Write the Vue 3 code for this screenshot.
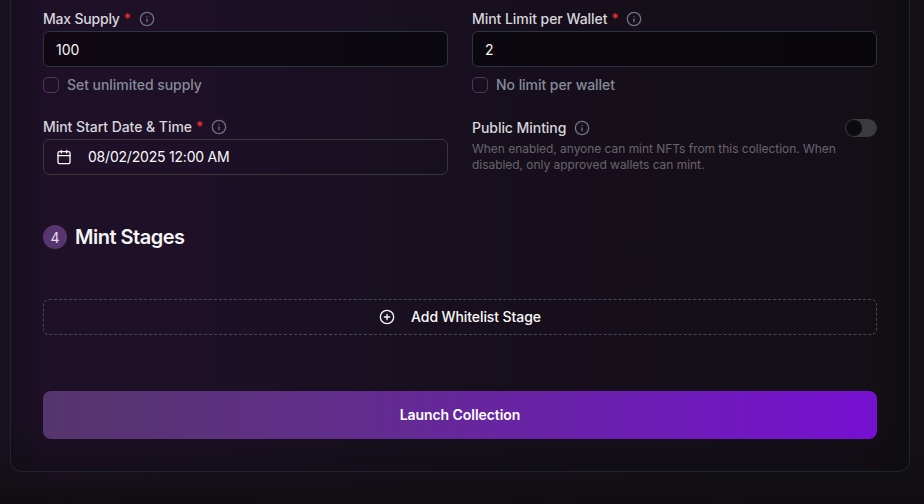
<script setup>
import { ref, h } from 'vue'

const supply = ref('100')
const limit = ref('2')
const unlimited = ref(false)
const noLimit = ref(false)
const publicMint = ref(false)

const InfoIcon = () =>
  h('svg', {
    width: 16, height: 16, viewBox: '0 0 24 24', fill: 'none', stroke: '#6b7280',
    'stroke-width': 2, 'stroke-linecap': 'round', 'stroke-linejoin': 'round',
  }, [
    h('circle', { cx: 12, cy: 12, r: 10 }),
    h('path', { d: 'M12 16v-4' }),
    h('path', { d: 'M12 8h.01' }),
  ])
</script>

<template>
  <main class="page">
    <section class="card">
      <div class="grid">
        <div class="field">
          <div class="label tight"><span>Max Supply</span><span class="req">*</span><InfoIcon /></div>
          <input v-model="supply" class="input" type="text" />
          <label class="check"><input v-model="unlimited" type="checkbox" /><span>Set unlimited supply</span></label>
        </div>
        <div class="field">
          <div class="label"><span>Mint Limit per Wallet</span><span class="req">*</span><InfoIcon /></div>
          <input v-model="limit" class="input" type="text" />
          <label class="check"><input v-model="noLimit" type="checkbox" /><span>No limit per wallet</span></label>
        </div>
        <div class="field">
          <div class="label"><span>Mint Start Date &amp; Time</span><span class="req">*</span><InfoIcon /></div>
          <button class="date">
            <svg width="16" height="16" viewBox="0 0 24 24" fill="none" stroke="currentColor" stroke-width="2" stroke-linecap="round" stroke-linejoin="round">
              <path d="M8 2v4M16 2v4M3 10h18" /><rect x="3" y="4" width="18" height="18" rx="2" />
            </svg>
            <span>08/02/2025 12:00 AM</span>
          </button>
        </div>
        <div class="field">
          <div class="toggle-row">
            <div class="label"><span>Public Minting</span><InfoIcon /></div>
            <button class="switch" :class="{ on: publicMint }" role="switch" :aria-checked="publicMint" @click="publicMint = !publicMint"><i></i></button>
          </div>
          <p class="hint">When enabled, anyone can mint NFTs from this collection. When disabled, only approved wallets can mint.</p>
        </div>
      </div>

      <div class="heading">
        <span class="step">4</span>
        <h2>Mint Stages</h2>
      </div>

      <button class="add">
        <svg width="16" height="16" viewBox="0 0 24 24" fill="none" stroke="currentColor" stroke-width="2" stroke-linecap="round" stroke-linejoin="round">
          <circle cx="12" cy="12" r="10" /><path d="M8 12h8M12 8v8" />
        </svg>
        <span>Add Whitelist Stage</span>
      </button>

      <button class="launch">Launch Collection</button>
    </section>
  </main>
</template>

<style>
body {
  background: #0f0d11;
}
</style>

<style scoped>
* {
  box-sizing: border-box;
}
.page {
  height: 504px;
  padding: 0 14px 32px 10px;
  overflow: hidden;
  font-family: Inter, "Liberation Sans", sans-serif;
  font-size: 14px;
  color: #f5f5f5;
  background:
    linear-gradient(180deg, transparent 430px, rgba(16, 14, 17, 0.5) 475px, #100e11 504px),
    linear-gradient(90deg, #18111f 0, #1f1228 60px, #1b1123 300px, #161019 650px, #131115 924px);
}
.card {
  height: 472px;
  padding: 11px 32px 0;
  border: 1px solid #1f2530;
  border-top: 0;
  border-radius: 0 0 12px 12px;
  background:
    linear-gradient(180deg, transparent 420px, rgba(14, 12, 17, 0.6) 472px),
    linear-gradient(90deg, #160f1c 0, #1e1027 34px, #1d1027 190px, #1a1022 300px, #160f1b 530px, #150f19 820px, #140e15 865px, #0f0d11 898px);
}
.grid {
  display: grid;
  grid-template-columns: 405px 405px;
  grid-template-rows: 108px 56px;
  column-gap: 24px;
}
.label {
  display: flex;
  align-items: center;
  height: 16px;
  font-weight: 500;
  line-height: 16px;
  letter-spacing: -0.05px;
  color: #d6d6dc;
  margin-bottom: 4px;
}
.label.tight {
  letter-spacing: -0.2px;
}
.label svg {
  margin-left: 8px;
}
.req {
  width: 7px;
  margin-left: 4px;
  color: #ef2b36;
}
.input {
  display: block;
  width: 100%;
  height: 36px;
  padding: 0 12px;
  border: 1px solid #2b3443;
  border-radius: 6px;
  outline: none;
  background: rgba(0, 0, 0, 0.5);
  color: #f5f5f5;
  font: 400 14px Inter, "Liberation Sans", sans-serif;
}
.check {
  display: flex;
  align-items: center;
  gap: 8px;
  height: 20px;
  margin-top: 8px;
  font-weight: 500;
  line-height: 16px;
  letter-spacing: -0.05px;
  color: #868b99;
}
.check span {
  padding-bottom: 1px;
}
.check input {
  appearance: none;
  width: 16px;
  height: 16px;
  margin: 0;
  border: 1px solid #553365;
  border-radius: 5px;
}
.check input:checked {
  background: #553365;
}
.date {
  display: flex;
  align-items: center;
  width: 100%;
  height: 36px;
  padding: 0 12px;
  gap: 16px;
  border: 1px solid #3a373b;
  border-radius: 6px;
  background: transparent;
  color: #fafafa;
  font: 400 14px Inter, "Liberation Sans", sans-serif;
  letter-spacing: -0.21px;
}
.date span,
.add span {
  padding-bottom: 1px;
}
.toggle-row {
  display: flex;
  justify-content: space-between;
  align-items: center;
  height: 18px;
}
.toggle-row .label {
  margin: 0;
}
.switch {
  width: 32px;
  height: 18px;
  padding: 1px;
  border: 0;
  border-radius: 9px;
  background: #3b3a3c;
}
.switch i {
  display: block;
  width: 16px;
  height: 16px;
  border-radius: 50%;
  background: #0c0b0d;
}
.switch.on i {
  margin-left: 14px;
}
.hint {
  margin: 4px 0 0;
  font-size: 12px;
  line-height: 16px;
  letter-spacing: -0.04px;
  color: #68646a;
}
.heading {
  display: flex;
  align-items: center;
  gap: 8px;
  height: 28px;
  margin-top: 48px;
}
.step {
  display: flex;
  align-items: center;
  justify-content: center;
  width: 24px;
  height: 24px;
  border-radius: 50%;
  background: #59356f;
  color: #e5dfe9;
}
h2 {
  margin: 0;
  font-size: 20px;
  line-height: 28px;
  font-weight: 600;
  letter-spacing: -0.5px;
}
.add {
  display: flex;
  align-items: center;
  justify-content: center;
  gap: 16px;
  width: 100%;
  height: 36px;
  margin-top: 48px;
  border: 1px dashed #434955;
  border-radius: 6px;
  background: transparent;
  color: #fafafa;
  font: 500 14px Inter, "Liberation Sans", sans-serif;
  letter-spacing: -0.09px;
}
.launch {
  display: block;
  width: 100%;
  height: 48px;
  margin-top: 56px;
  padding: 0 0 2px;
  border: 0;
  border-radius: 8px;
  background: linear-gradient(90deg, #56356c, #602f88 32%, #7610d2);
  color: #fff;
  font: 600 14px Inter, "Liberation Sans", sans-serif;
  letter-spacing: -0.06px;
}
</style>
